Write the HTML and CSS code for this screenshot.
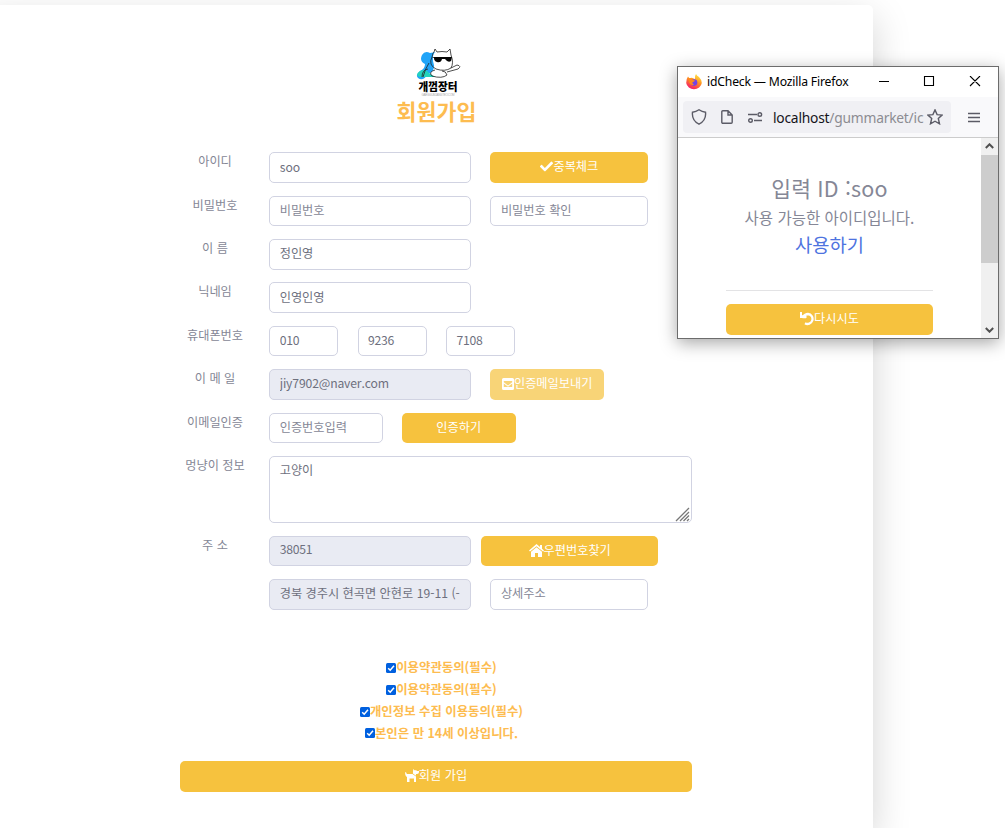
FILE: index.html
```
<!DOCTYPE html>
<html lang="ko">
<head>
<meta charset="utf-8">
<title>회원가입</title>
<link rel="stylesheet" href="styles.css">
</head>
<body>
<main class="card">
  <form class="form">
    <header class="head">
      <svg class="logo" viewBox="0 0 46 48" width="46" height="48">
        <path d="M6 7Q9 2 14 5L20 4Q22 10 18 18Q18 24 12 26Q7 34 2 30Q-1 27 4 23Q9 21 9 16Q3 13 6 7Z" fill="#20a4f8"/>
        <path d="M4 23Q10 20 13 25L19 29H4Q-2 27 4 23Z" fill="#22d3bd"/>
        <path d="M17 8Q18 4 20 4Q27 2 32 4Q37 10 36 17Q33 24 26 23Q18 22 17 13Z" fill="#fff"/>
        <path d="M16 9Q17 4 18 4L19 1L21 4Q26 3 31 4L34 1L35 7Q38 15 35 20Q29 24 20 21Q12 17 16 9ZM13 15Q9 21 7 29M19 22Q12 24 16 28Q26 31 31 27Q30 23 26 23M35 20L41 17Q46 18 42 21L31 24M6 29Q6 22 12 21" fill="none" stroke="#222" stroke-width=".8"/>
        <path d="M16 9H36L35 13Q32 15 29 11H26Q25 15 21 14Q18 13 18 10Z" fill="#050505"/>
        <text class="logo-name" x="22" y="43" text-anchor="middle" textLength="39" lengthAdjust="spacingAndGlyphs">개껌장터</text>
        <text class="logo-sub" x="22" y="47.500" text-anchor="middle" textLength="33">GAEGGUMJANGTEO.COM</text>
      </svg>
      <h1 class="title">회원가입</h1>
    </header>

    <div class="row"><label class="label">아이디</label><input class="input w-lg" value="soo">
      <button type="button" class="btn w-md"><svg class="icon" viewBox="0 0 512 512" width="13" height="13"><path d="M174 439L7 273a26 26 0 0 1 0-36l36-37a26 26 0 0 1 37 0l112 113L432 73a26 26 0 0 1 37 0l36 36a26 26 0 0 1 0 37L210 439a26 26 0 0 1-36 0z"/></svg>중복체크</button></div>
    <div class="row"><label class="label">비밀번호</label><input class="input w-lg" placeholder="비밀번호"><input class="input w-md" placeholder="비밀번호 확인"></div>
    <div class="row"><label class="label">이 름</label><input class="input w-lg" value="정인영"></div>
    <div class="row"><label class="label">닉네임</label><input class="input w-lg" value="인영인영"></div>
    <div class="row"><label class="label">휴대폰번호</label><input class="input w-xs num" value="010"><input class="input w-xs num" value="9236"><input class="input w-xs num" value="7108"></div>
    <div class="row"><label class="label">이 메 일</label><input class="input w-lg mail" value="jiy7902@naver.com" readonly>
      <button type="button" class="btn w-sm faded"><svg class="icon" viewBox="0 0 12 12" width="12" height="12"><path fill-rule="evenodd" d="M1.500 0h9A1.500 1.500 0 0 1 12 1.500v9A1.500 1.500 0 0 1 10.500 12h-9A1.500 1.500 0 0 1 0 10.500v-9A1.500 1.500 0 0 1 1.500 0zM1.800 3v1.200L6 7.500l4.200-3.300V3H1.800zM1.800 5.500V9h8.400V5.500L6 8.800z"/></svg>인증메일보내기</button></div>
    <div class="row"><label class="label">이메일인증</label><input class="input w-sm" placeholder="인증번호입력"><button type="button" class="btn w-sm">인증하기</button></div>
    <div class="row tall"><label class="label">멍냥이 정보</label>
      <div class="area-wrap"><textarea class="input area">고양이</textarea>
        <svg class="grip" viewBox="0 0 15 15" width="15" height="15"><path d="M1 14L14 1M5 14L14 5M8.500 14L14 8.500M12 14L14 12" stroke="#777" stroke-width="1.300"/></svg></div></div>
    <div class="row zip"><label class="label">주 소</label><input class="input w-lg num" value="38051" readonly>
      <button type="button" class="btn w-zip"><svg class="icon" viewBox="0 0 15 13" width="15" height="13"><path d="M7.500 0L11 3V1h2v3.700L15 6.500l-1 1L7.500 2.200 1 7.500l-1-1z"/><path d="M7.500 3.300L13 7.800V13H9V9H6v4H2V7.800z"/></svg>우편번호찾기</button></div>
    <div class="row"><span class="label"></span><input class="input w-lg" value="경북 경주시 현곡면 안현로 19-11 (-" readonly><input class="input w-md" placeholder="상세주소"></div>

    <div class="terms">
      <label class="term"><svg class="check" viewBox="0 0 10 10"><path d="M2.200 5.200l2 2 3.800-4.400"/></svg>이용약관동의(필수)</label>
      <label class="term"><svg class="check" viewBox="0 0 10 10"><path d="M2.200 5.200l2 2 3.800-4.400"/></svg>이용약관동의(필수)</label>
      <label class="term"><svg class="check" viewBox="0 0 10 10"><path d="M2.200 5.200l2 2 3.800-4.400"/></svg>개인정보 수집 이용동의(필수)</label>
      <label class="term"><svg class="check" viewBox="0 0 10 10"><path d="M2.200 5.200l2 2 3.800-4.400"/></svg>본인은 만 14세 이상입니다.</label>
    </div>
    <button type="button" class="btn submit"><svg class="icon" viewBox="0 0 14 13" width="14" height="13"><path d="M.2 3Q1.500 3 1.600 4.500Q1.700 5 2.500 5H7.500L11 7.500V13H9V9.500H4.500V13H2V8Q.8 7.500 .4 6Q0 4.500 .2 3z"/><path d="M8.200 0l1.300 1.200H11.300l.7.900H14v1.200Q14 5 12 5H11v1.700L7.900 4.600z"/></svg>회원 가입</button>
  </form>
</main>

<section class="window">
  <div class="titlebar">
    <svg class="fox" viewBox="0 0 16 16" width="16" height="16">
      <defs><linearGradient id="flame" x1=".8" y1="0" x2=".3" y2="1"><stop offset="0" stop-color="#fff04a"/><stop offset=".45" stop-color="#ff9421"/><stop offset="1" stop-color="#f5156c"/></linearGradient></defs>
      <path d="M10 0Q11 2 13 3Q16 6 15.800 9A7.900 7.500 0 0 1 .2 9Q0 5 2 2.500L3.500 4.500Q5 3.500 6.500 4L9 5Q8.500 2 10 0z" fill="url(#flame)"/>
      <circle cx="8" cy="8.600" r="3.300" fill="#7542e5"/>
      <path d="M2 4Q5 3.500 7 6L9 6.500Q8 8 6.500 8Q6 10 8 10.500Q5 12 3.500 9z" fill="#ff8a1c"/>
    </svg>
    <span class="caption">idCheck — Mozilla Firefox</span>
    <svg class="controls" viewBox="0 0 104 12" width="104" height="12"><path d="M1 5.500H11M46.500 .5h9v9h-9zM92 0l10 10M102 0L92 10" fill="none" stroke="#000" stroke-width="1.100"/></svg>
  </div>
  <div class="toolbar">
    <div class="urlbar">
      <svg class="line-icon" viewBox="0 0 16 16" width="16" height="16"><path d="M8 .8Q11 3 14.500 3.200Q15.500 11.500 8 15.200Q.5 11.500 1.500 3.200Q5 3 8 .8z"/></svg>
      <svg class="line-icon page" viewBox="0 0 12 14" width="12" height="14"><path d="M1.800.8H7L11.200 5V12.200a1 1 0 0 1-1 1H1.800a1 1 0 0 1-1-1V1.800a1 1 0 0 1 1-1zM7 .8V5h4.200"/></svg>
      <svg class="line-icon sliders" viewBox="0 0 15 11" width="15" height="11"><path d="M0 2.500H9M6 8.500H14"/><circle cx="11.800" cy="2.500" r="1.800"/><circle cx="2.500" cy="8.500" r="1.800"/></svg>
      <span class="url"><b class="host">localhost</b>/gummarket/ic</span>
      <svg class="line-icon star" viewBox="0 0 16 16" width="16" height="16"><path d="M8 .9l2.100 4.700 5 .5-3.800 3.400 1.200 5.300L8 12.200l-4.500 2.600 1.200-5.300L.9 6.100l5-.5z"/></svg>
    </div>
    <svg class="line-icon menu" viewBox="0 0 12 11" width="12" height="11"><path d="M0 1.500h12M0 5.500h12M0 9.500h12"/></svg>
  </div>
  <div class="viewport">
    <div class="result">
      <h2 class="result-id">입력 ID :soo</h2>
      <p class="result-text">사용 가능한 아이디입니다.</p>
      <a class="result-link">사용하기</a>
      <hr class="rule">
      <button type="button" class="btn retry"><svg class="icon" viewBox="0 0 14 14" width="14" height="14"><path d="M2.500 5H6M3 5Q5 2 8 2A5 5 0 1 1 5 11.300" fill="none" stroke="#fff" stroke-width="2.300"/><path d="M0 0h2v3.300h4.500V6H0z"/></svg>다시시도</button>
    </div>
    <div class="scrollbar">
      <svg class="arrow" viewBox="0 0 9 6" width="9" height="6"><path d="M.8 5L4.500 1.300 8.200 5"/></svg>
      <div class="thumb"></div>
      <svg class="arrow down" viewBox="0 0 9 6" width="9" height="6"><path d="M.8 1L4.500 4.700 8.200 1"/></svg>
    </div>
  </div>
</section>
</body>
</html>
```

FILE: styles.css
```
* { box-sizing: border-box; }
body {
  margin: 0;
  height: 828px;
  overflow: hidden;
  background: #fff;
  font: 12.200px/19px "Noto Sans CJK KR", sans-serif;
  color: #858796;
}
.card {
  width: 893px;
  height: 823px;
  margin: 5px 0 0 -20px;
  padding: 43px 0 0 200px;
  background: #fff;
  border-radius: 5px 5px 0 0;
  box-shadow: 0 13px 38px rgba(0, 0, 0, .175);
}
.form { width: 512px; }
.head {
  display: flex;
  flex-direction: column;
  align-items: center;
  height: 104.400px;
}
.logo { flex: none; margin-left: 5px; }
.logo-name { font: 900 11px "Noto Sans CJK KR", sans-serif; fill: #000; }
.logo-sub { font: 3px "Liberation Sans", sans-serif; fill: #aaa; }
.title {
  margin: 1px 0 0 1px;
  font-size: 21.700px;
  line-height: 28px;
  font-weight: 700;
  color: #fdbc50;
}
.row { display: flex; gap: 19.200px; height: 30.600px; margin-bottom: 12.770px; }
.tall { height: 67px; }
.zip { gap: 10px; }
.zip .label { margin-right: 9.200px; }
.label { flex: none; width: 70px; line-height: 18px; text-align: center; white-space: nowrap; }
.input {
  display: block;
  height: 100%;
  padding: 0 9.500px 2px;
  border: 1px solid #d1d3e2;
  border-radius: 5px;
  background: #fff;
  font: inherit;
  color: #6e707e;
  outline: none;
}
.input::placeholder { color: #858796; opacity: 1; }
.input:read-only { background: #e9ebf3; }
.w-lg { width: 202px; }
.w-md { width: 158px; }
.w-sm { width: 113.600px; }
.w-xs { width: 69.200px; }
.w-zip { width: 177px; }
.num { padding-bottom: 3px; letter-spacing: -.25px; }
.mail { padding-bottom: 3px; letter-spacing: -.15px; }
.area-wrap { position: relative; width: 423px; }
.area { width: 100%; padding: 4px 9.500px; resize: none; }
.grip { position: absolute; right: 2px; bottom: 1px; }
.btn {
  display: flex;
  align-items: center;
  justify-content: center;
  height: 30.600px;
  padding: 0 0 1.500px;
  border: 0;
  border-radius: 5px;
  background: #f6c23e;
  font: inherit;
  color: #fff;
  white-space: nowrap;
}
.faded { opacity: .7; }
.icon { flex: none; fill: #fff; }
.terms {
  display: flex;
  flex-direction: column;
  align-items: center;
  padding: 35px 0 0 11px;
  font-size: 12.400px;
  font-weight: 700;
  line-height: 21.700px;
  color: #fdbc50;
}
.term { display: flex; align-items: center; }
.check { width: 10px; height: 10px; background: #0060df; border-radius: 1.500px; }
.check path { fill: none; stroke: #fff; stroke-width: 1.500; }
.submit { width: 100%; margin-top: 17px; }

/* Popup window floating above the page */
.window {
  position: absolute;
  left: 677px;
  top: 66px;
  width: 322px;
  height: 273px;
  border: 1px solid #6c6c6c;
  background: #fff;
  box-shadow: 0 4px 16px rgba(0, 0, 0, .35);
}
.titlebar { display: flex; align-items: center; height: 30px; padding: 0 16px 0 8px; }
.caption { margin: -2px auto 0 5px; font: 12.200px "Noto Sans", sans-serif; color: #000; letter-spacing: -.18px; white-space: nowrap; }
.toolbar {
  display: flex;
  align-items: center;
  gap: 17px;
  height: 41px;
  padding: 0 0 0 5px;
  background: #f9f9fb;
  border-bottom: 1px solid #ccc;
}
.urlbar { display: flex; align-items: center; width: 268px; height: 32px; padding: 0 8px; background: #f0f0f4; border-radius: 4px; }
.line-icon { flex: none; fill: none; stroke: #5b5b66; stroke-width: 1.400; }
.page { margin-left: 14px; }
.sliders { margin-left: 15px; }
.url { flex: 1; margin-left: 10px; font: 13.800px "Noto Sans", sans-serif; letter-spacing: -.22px; color: #8c8c92; white-space: nowrap; }
.host { font-weight: 400; color: #15141a; }
.star { margin-left: 4px; }
.viewport { display: flex; height: 200px; }
.result {
  display: flex;
  flex-direction: column;
  align-items: center;
  width: 303px;
  padding: 36px 48px 0;
}
.result-id { margin: 0; font-size: 21.500px; line-height: 27px; font-weight: 400; letter-spacing: .15px; white-space: nowrap; }
.result-text { margin: 5px 0 0; font-size: 15.500px; line-height: 22px; white-space: nowrap; }
.result-link { margin-top: 3px; font-size: 18.700px; line-height: 26px; color: #4e73df; }
.rule { width: 207px; margin: 33px 0 13px; border: 0; border-top: 1px solid #e3e3e5; }
.retry { flex: none; width: 207px; }
.scrollbar { display: flex; flex-direction: column; align-items: center; width: 17px; padding: 5px 0; background: #f0f0f0; }
.arrow { flex: none; fill: none; stroke: #505050; stroke-width: 2; }
.thumb { width: 17px; height: 108px; margin-top: 6px; background: #cdcdcd; }
.down { margin-top: auto; }
```
